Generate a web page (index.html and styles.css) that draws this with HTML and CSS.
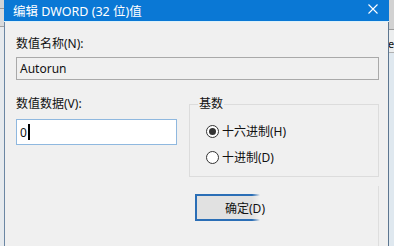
FILE: index.html
```html
<!DOCTYPE html>
<html lang="zh-CN">
<head>
    <meta charset="UTF-8">
    <title>编辑 DWORD (32 位)值</title>
    <link rel="stylesheet" href="styles.css">
</head>
<body>
    <div class="screen">
        <div class="edge-left"></div>
        <div class="dialog">
            <div class="title-bar">
                <span>编辑 DWORD (32 位)值</span>
                <svg class="close" width="10" height="10" viewBox="0 0 10 10">
                    <path d="M0.5 0.5 L9.5 9.5 M9.5 0.5 L0.5 9.5" stroke="#fff" stroke-width="1.1" fill="none"/>
                </svg>
            </div>
            <div class="content">
                <div class="field">
                    <label>数值名称(N):</label>
                    <div class="input readonly">Autorun</div>
                </div>
                <div class="row">
                    <div class="field value">
                        <label>数值数据(V):</label>
                        <div class="input focus">0<span class="caret"></span></div>
                    </div>
                    <fieldset class="base">
                        <legend>基数</legend>
                        <div class="radios">
                            <div class="radio"><span class="dot checked"></span>十六进制(H)</div>
                            <div class="radio"><span class="dot"></span>十进制(D)</div>
                        </div>
                    </fieldset>
                </div>
                <div class="button-row">
                    <button class="ok">确定(D)</button>
                    <div class="ghost"></div>
                </div>
            </div>
        </div>
        <div class="edge-right"><span>e</span></div>
    </div>
</body>
</html>
```

FILE: styles.css
```css
body {
    margin: 0;
    padding: 0;
    background: #f0f0f0;
    font-family: "Noto Sans", "Noto Sans CJK SC", sans-serif;
    font-size: 12px;
    color: #111;
}
.screen {
    display: flex;
    width: 394px;
    height: 246px;
    overflow: hidden;
}
.edge-left {
    width: 4px;
    flex: none;
    background: linear-gradient(to bottom, #cfd3d6 0 8px, #9a9a9a 8px 9px, #d8dadc 9px 26px, #a0a0a0 26px 27px, #e6eaee 27px);
}
.edge-right {
    width: 5px;
    flex: none;
    overflow: hidden;
    background: linear-gradient(to bottom, #d2d2d2 0 29px, #9c9c9c 29px 30px, #eceeef 30px 52px, #b0b0b0 52px 53px, #dfe8ef 53px);
    font-size: 11px;
    line-height: 12px;
}
.edge-right span {
    display: block;
    margin: 38px 0 0 -1px;
}
.dialog {
    width: 385px;
    flex: none;
    display: flex;
    flex-direction: column;
}
.title-bar {
    height: 26px;
    background: #0a78d5;
    color: #fff;
    display: flex;
    align-items: center;
    justify-content: space-between;
    padding: 0 11px 0 9px;
    font-size: 12.5px;
    border-bottom: 1px solid #dcf1fa;
}
.title-bar .close {
    margin-top: -3px;
}
.content {
    flex: 1;
    border-left: 1px solid #6b86a3;
    border-right: 1px solid #5d7690;
    padding: 14px 9px 0 11px;
}
.field label {
    display: block;
    line-height: 16px;
}
.input {
    margin-top: 6px;
    height: 23px;
    box-sizing: border-box;
    border: 1px solid #a9a9a9;
    padding-left: 3px;
    display: flex;
    align-items: center;
}
.input.readonly {
    background: #f0f0f0;
    margin-top: 5px;
}
.input.focus {
    height: 26px;
    background: #fff;
    border-color: #8fb8df;
    margin-top: 7px;
}
.caret {
    display: inline-block;
    width: 2px;
    height: 16px;
    background: #000;
    margin-left: 1px;
}
.row {
    display: flex;
    gap: 12px;
    margin-top: 16px;
}
.row .value {
    width: 161px;
    flex: none;
}
.base {
    flex: 1;
    margin: 0;
    padding: 0;
    border: 1px solid #dcdcdc;
    min-width: 0;
}
.base legend {
    margin-left: 8px;
    padding: 0 1px;
    line-height: 16px;
}
.radios {
    padding: 6px 0 6px 16px;
}
.radio {
    height: 26px;
    display: flex;
    align-items: center;
}
.dot {
    width: 13px;
    height: 13px;
    box-sizing: border-box;
    border: 1px solid #333;
    border-radius: 50%;
    margin-right: 3px;
    display: flex;
    align-items: center;
    justify-content: center;
    background: #fff;
}
.dot.checked::after {
    content: "";
    width: 7px;
    height: 7px;
    border-radius: 50%;
    background: #333;
}
.button-row {
    display: flex;
    margin-top: 9px;
}
.ok {
    margin: 8px 0 0 179px;
    width: 100px;
    height: 27px;
    font: inherit;
    color: #111;
    padding: 0 2px 0 0;
    border-style: solid;
    border-width: 2px 0 2px 2px;
    border-image: linear-gradient(to right, #2a6eb6 0 56%, rgba(42, 110, 182, 0) 64%) 1;
    background: linear-gradient(to right, #e1e1e1 0 56%, #f0f0f0 64%);
    outline: none;
}
.ghost {
    margin-left: auto;
    width: 1px;
    height: 60px;
    background: #dedede;
}
```
